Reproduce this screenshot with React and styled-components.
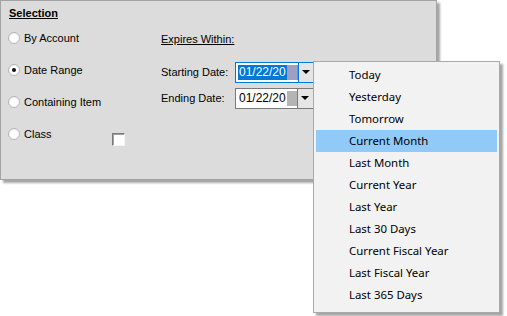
import React from "react";
import styled, { createGlobalStyle } from "styled-components";

const GlobalStyle = createGlobalStyle`
  body {
    margin: 0;
    background: #ffffff;
    font-family: "Liberation Sans", Arial, sans-serif;
  }
`;

const Stage = styled.div`
  position: relative;
  width: 507px;
  height: 316px;
  overflow: hidden;
`;

const Panel = styled.div`
  box-sizing: border-box;
  width: 437px;
  height: 180px;
  background: #dcdcdc;
  border: 1px solid #a3a3a3;
  box-shadow: 3px 3px 2px rgba(0, 0, 0, 0.35);
  display: grid;
  grid-template-columns: 152px 1fr;
  font-size: 11px;
  color: #000;
`;

const LeftCol = styled.div`
  padding: 5px 0 0 7px;
  display: flex;
  flex-direction: column;
`;

const Title = styled.div`
  font-weight: bold;
  text-decoration: underline;
  line-height: 14px;
  padding-left: 1px;
  margin-bottom: 2px;
`;

const RadioRow = styled.label`
  display: flex;
  align-items: center;
  height: ${(p) => p.h || 32}px;
  gap: 4px;
  position: relative;
`;

const Radio = styled.span`
  box-sizing: border-box;
  width: 12px;
  height: 12px;
  border-radius: 50%;
  border: 1px solid #b5b5b5;
  background: radial-gradient(circle at 60% 60%, #ffffff 55%, #e6e6e6 100%);
  display: flex;
  align-items: center;
  justify-content: center;
  &::after {
    content: "";
    width: 4px;
    height: 4px;
    border-radius: 50%;
    background: ${(p) => (p.checked ? "#111" : "transparent")};
  }
`;

const Check = styled.span`
  position: absolute;
  left: 104px;
  top: 15px;
  box-sizing: border-box;
  width: 13px;
  height: 13px;
  background: #fff;
  border-top: 1px solid #7a7a7a;
  border-left: 1px solid #7a7a7a;
  border-right: 1px solid #f4f4f4;
  border-bottom: 1px solid #f4f4f4;
  box-shadow: inset 1px 1px 0 #a0a0a0;
`;

const RightCol = styled.div`
  padding: 31px 0 0 8px;
  display: flex;
  flex-direction: column;
`;

const Heading = styled.div`
  text-decoration: underline;
  line-height: 14px;
  margin-bottom: 16px;
`;

const FieldRow = styled.div`
  display: flex;
  align-items: center;
  height: 20px;
  margin-bottom: 6px;
`;

const Label = styled.span`
  width: 74px;
`;

const Combo = styled.div`
  box-sizing: border-box;
  width: 79px;
  height: 21px;
  display: flex;
  border: 1px solid ${(p) => (p.focused ? "#0078d7" : "#7a7a7a")};
  background: #fff;
`;

const ComboText = styled.div`
  flex: 1;
  display: flex;
  align-items: center;
  padding-left: 2px;
  font-size: 12px;
`;

const DateText = styled.span`
  line-height: 15px;
  padding: 0 1px;
  background: ${(p) => (p.selected ? "#0078d7" : "transparent")};
  color: ${(p) => (p.selected ? "#fff" : "#000")};
`;

const Clip = styled.span`
  width: 10px;
  height: 15px;
  background: ${(p) => (p.selected ? "#9f9fc4" : "#b4b4b4")};
  border-right: ${(p) => (p.selected ? "1px solid #e07a2a" : "none")};
`;

const ComboButton = styled.div`
  width: 16px;
  border-left: 1px solid ${(p) => (p.focused ? "#0078d7" : "#7a7a7a")};
  background: #e5e5e5;
  display: flex;
  align-items: center;
  justify-content: center;
  &::after {
    content: "";
    border-left: 4px solid transparent;
    border-right: 4px solid transparent;
    border-top: 4px solid #000;
  }
`;

const Menu = styled.ul`
  position: absolute;
  left: 313px;
  top: 61px;
  box-sizing: border-box;
  width: 187px;
  height: 252px;
  margin: 0;
  padding: 2px 1px;
  list-style: none;
  background: #f2f2f2;
  border: 1px solid #a8a8a8;
  box-shadow: 3px 3px 2px rgba(0, 0, 0, 0.35);
  font-family: "Segoe UI", "Noto Sans", "Liberation Sans", sans-serif;
  font-size: 11.4px;
  color: #000;
`;

const MenuItem = styled.li`
  height: 22px;
  line-height: 22px;
  margin: 0 1px;
  padding-left: 33px;
  background: ${(p) => (p.active ? "#91c9f7" : "transparent")};
`;

const options = [
  "Today",
  "Yesterday",
  "Tomorrow",
  "Current Month",
  "Last Month",
  "Current Year",
  "Last Year",
  "Last 30 Days",
  "Current Fiscal Year",
  "Last Fiscal Year",
  "Last 365 Days",
];

const DateCombo = ({ focused }) => (
  <Combo focused={focused}>
    <ComboText>
      <DateText selected={focused}>01/22/20</DateText>
      <Clip selected={focused} />
    </ComboText>
    <ComboButton focused={focused} />
  </Combo>
);

export default function App() {
  return (
    <Stage>
      <GlobalStyle />
      <Panel>
        <LeftCol>
          <Title>Selection</Title>
          <RadioRow>
            <Radio /> By Account
          </RadioRow>
          <RadioRow>
            <Radio checked /> Date Range
          </RadioRow>
          <RadioRow>
            <Radio /> Containing Item
          </RadioRow>
          <RadioRow h={31}>
            <Radio /> Class
            <Check />
          </RadioRow>
        </LeftCol>
        <RightCol>
          <Heading>Expires Within:</Heading>
          <FieldRow>
            <Label>Starting Date:</Label>
            <DateCombo focused />
          </FieldRow>
          <FieldRow>
            <Label>Ending Date:</Label>
            <DateCombo />
          </FieldRow>
        </RightCol>
      </Panel>
      <Menu>
        {options.map((o) => (
          <MenuItem key={o} active={o === "Current Month"}>
            {o}
          </MenuItem>
        ))}
      </Menu>
    </Stage>
  );
}
